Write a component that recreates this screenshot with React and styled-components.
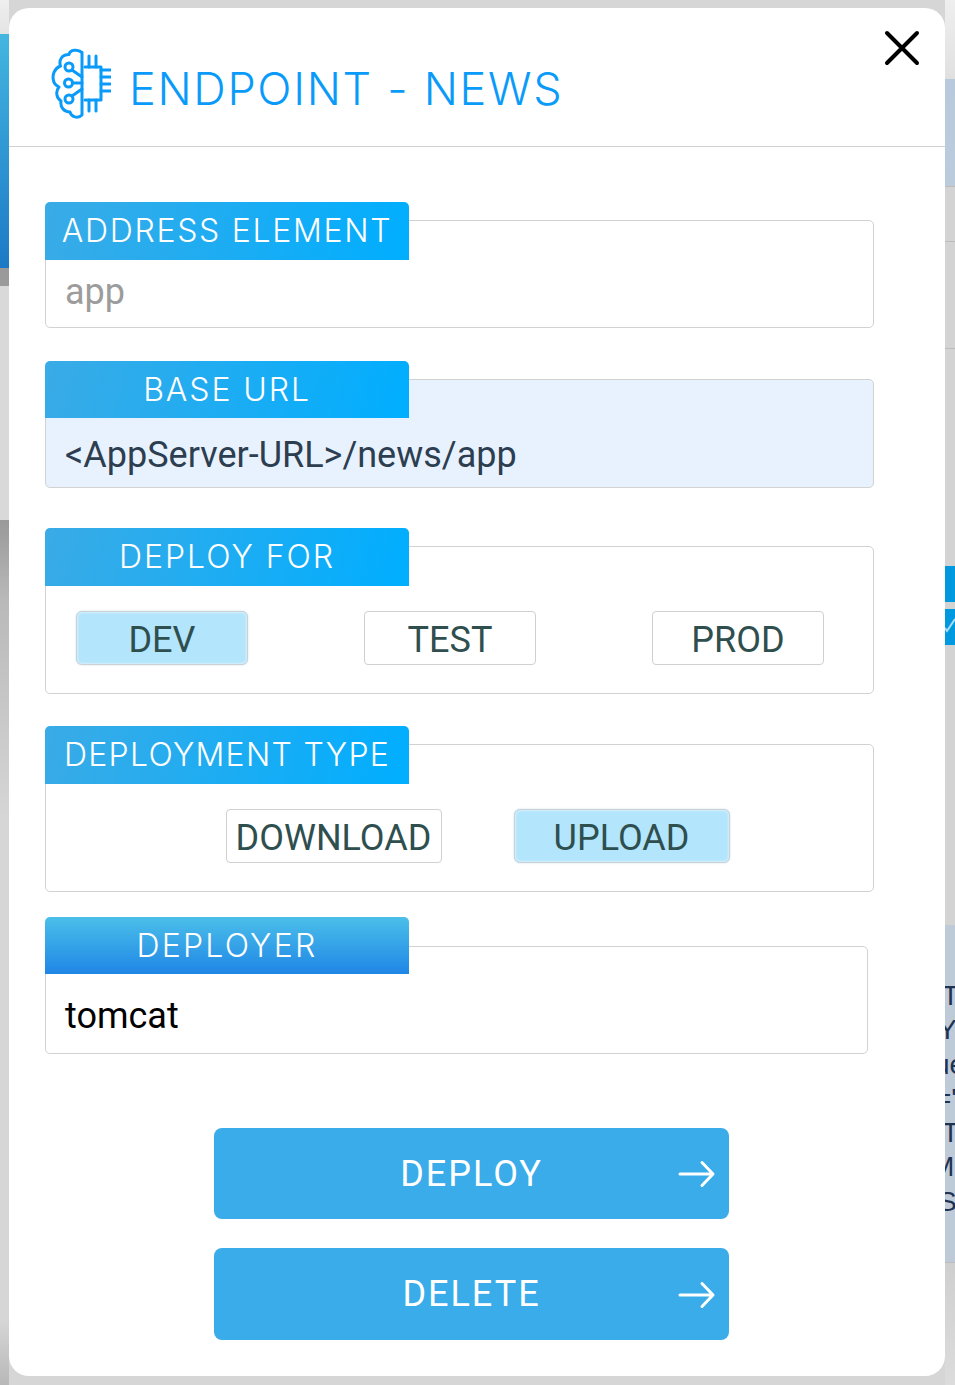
import React from "react";
import styled, { createGlobalStyle } from "styled-components";

const Global = createGlobalStyle`
  html, body { margin: 0; padding: 0; background: #d6d6d6; }
  #root { width: 955px; height: 1385px; overflow: hidden; position: relative; }
`;

const Backdrop = styled.div`
  display: flex;
  justify-content: space-between;
  width: 955px;
  height: 1385px;
`;
const Strip = styled.div`
  display: flex;
  flex-direction: column;
  width: ${(p) => p.$w}px;
  height: 1385px;
  overflow: hidden;
`;
const Block = styled.div`
  height: ${(p) => p.$h}px;
  flex: none;
  background: ${(p) => p.$bg};
  box-sizing: border-box;
  border-bottom: ${(p) => (p.$line ? "1px solid #bcbcbc" : "none")};
  color: #fff;
  overflow: hidden;
`;
const CodeBlock = styled(Block)`
  padding-top: 54px;
  color: #1f3350;
  font: 28px/34.3px "Liberation Sans", sans-serif;
`;
const CodeLine = styled.div`
  margin-left: ${(p) => p.$x}px;
  white-space: nowrap;
`;
const Tick = styled.svg`
  display: block;
  margin-top: 5px;
`;

const Modal = styled.div`
  position: absolute;
  left: 9px;
  top: 8px;
  width: 936px;
  height: 1368px;
  background: #fff;
  border-radius: 20px;
`;
const Header = styled.header`
  display: flex;
  align-items: center;
  height: 139px;
  box-sizing: border-box;
  padding: 13px 0 0 42px;
  gap: 18px;
  border-bottom: 1px solid #d0d0d0;
`;
const Title = styled.h1`
  margin: 0;
  padding-top: 10px;
  font: 300 45px/1 Inter, sans-serif;
  letter-spacing: 1.7px;
  color: #0a9bfa;
  white-space: nowrap;
`;
const Close = styled.svg`
  position: absolute;
  left: 873px;
  top: 20px;
`;
const Body = styled.div`
  display: flex;
  flex-direction: column;
  padding: 55px 0 0 36px;
`;
const Field = styled.section`
  display: flex;
  flex-direction: column;
  margin-top: ${(p) => p.$mt}px;
`;
const Label = styled.div`
  position: relative;
  z-index: 1;
  display: flex;
  align-items: center;
  justify-content: center;
  width: 364px;
  height: ${(p) => p.$h}px;
  border-radius: 5px 5px 0 0;
  background: ${(p) =>
    p.$vertical
      ? "linear-gradient(180deg, #4bbfe9, #1f86e6)"
      : "linear-gradient(105deg, #3aabe6, #00aeff)"};
  color: #fff;
  font: 300 32px/1 Inter, sans-serif;
  letter-spacing: ${(p) => p.$ls}px;
  white-space: nowrap;
`;
const Box = styled.div`
  display: flex;
  align-items: center;
  box-sizing: border-box;
  width: ${(p) => p.$w || 829}px;
  height: ${(p) => p.$h}px;
  margin-top: ${(p) => -p.$overlap}px;
  padding: ${(p) => p.$overlap + (p.$pt || 0)}px ${(p) => p.$pr || 0}px 0 ${(p) => p.$pl ?? 19}px;
  border: 1px solid #d2d2d2;
  border-radius: 5px;
  background: ${(p) => p.$bg || "#fff"};
  justify-content: ${(p) => p.$justify || "flex-start"};
  gap: ${(p) => p.$gap || 0}px;
`;
const Value = styled.span`
  font: 400 36px/1 Roboto, sans-serif;
  color: ${(p) => p.$color};
  white-space: nowrap;
`;
const Toggle = styled.div`
  display: flex;
  align-items: center;
  justify-content: center;
  box-sizing: border-box;
  width: ${(p) => p.$w}px;
  height: 54px;
  padding-top: 4px;
  border: 1px solid #d0d0d0;
  border-radius: ${(p) => (p.$on ? 6 : 4)}px;
  background: ${(p) => (p.$on ? "#b3e5fc" : "#fff")};
  box-shadow: ${(p) => (p.$on ? "inset 0 0 3px rgba(255,255,255,.9), 0 0 2px rgba(120,200,240,.5)" : "none")};
  color: #2f4f4f;
  font: 400 36px/1 Roboto, "Noto Sans", sans-serif;
`;
const Action = styled.button`
  position: relative;
  display: flex;
  align-items: center;
  justify-content: center;
  box-sizing: border-box;
  width: 515px;
  height: ${(p) => p.$h}px;
  margin: ${(p) => p.$mt}px 0 0 169px;
  padding: 0;
  border: 0;
  border-radius: 8px;
  background: #39ace9;
  color: #fff;
  font: 400 36px/1 Roboto, sans-serif;
  letter-spacing: 2px;
`;
const Arrow = styled.svg`
  position: absolute;
  right: 13px;
  top: 50%;
  margin-top: ${(p) => p.$mt}px;
`;

const ArrowIcon = ({ mt }) => (
  <Arrow $mt={mt} width="38" height="30" viewBox="0 0 38 30" fill="none" stroke="#fff" strokeWidth="3" strokeLinecap="round" strokeLinejoin="round">
    <path d="M2 15H35M24 3.500 35 15 24 26.500" />
  </Arrow>
);

const Logo = () => (
  <svg width="60" height="72" viewBox="0 0 60 72" fill="none" stroke="#0a9bfa" strokeWidth="3" strokeLinecap="round" strokeLinejoin="round">
    <path d="M31 4.500C27 1 19 1.500 18 6.500 11 6.500 7.500 12 9.500 18 3.500 20 1 27 2.500 32.500 3 36 6 38 8 39 4.500 43 5 50 10 53 9 59 13 64 19 64 20 69 27 71 31 67V4.500Z" />
    <circle cx="18" cy="19" r="4" />
    <circle cx="17.500" cy="35" r="4" />
    <circle cx="18" cy="51" r="4" />
    <path d="M21 22 31 29M21.500 35H31M21 48 31 41" />
    <path d="M34 19H50V36M50 40V52H34" />
    <path d="M38 19V8M45 19V8M38 52V63M45 52V63" />
    <path d="M50 22H59M50 29H59M50 36H59M50 43H59" />
    <path d="M50 37.500V38.500" />
  </svg>
);

export default function App() {
  return (
    <>
      <Global />
      <Backdrop>
        <Strip $w={9}>
          <Block $h={34} $bg="linear-gradient(180deg,#efefef,#e4e4e4)" />
          <Block $h={234} $bg="linear-gradient(180deg,#43b6e0,#1c79c6)" />
          <Block $h={18} $bg="#9a9a9a" />
          <Block $h={234} $bg="#d9d9d9" />
          <Block $h={865} $bg="linear-gradient(180deg,#999 0,#b9b9b9 80px,#d6d6d6 300px,#d6d6d6 800px,#b8b8b8 865px)" />
        </Strip>
        <Strip $w={10}>
          <Block $h={79} $bg="linear-gradient(180deg,#efefef,#e0e0e0)" />
          <Block $h={108} $bg="linear-gradient(180deg,#b9c9dd,#bccbdc)" $line />
          <Block $h={55} $bg="#d3d3d3" $line />
          <Block $h={107} $bg="#d3d3d3" $line />
          <Block $h={217} $bg="#d3d3d3" />
          <Block $h={36} $bg="#0099e0" />
          <Block $h={7} $bg="#d3d3d3" />
          <Block $h={36} $bg="#0099e0">
            <Tick width="10" height="26" viewBox="0 0 10 26" fill="none" stroke="#a9dcf5" strokeWidth="2">
              <path d="M0 14 2 17 10 5" />
            </Tick>
          </Block>
          <Block $h={280} $bg="#d3d3d3" />
          <CodeBlock $h={338} $bg="#bfcad9" $line>
            <CodeLine $x={-3}>T</CodeLine>
            <CodeLine $x={-7}>Y</CodeLine>
            <CodeLine $x={-11}>ue</CodeLine>
            <CodeLine $x={-10}>='</CodeLine>
            <CodeLine $x={-3}>T</CodeLine>
            <CodeLine $x={-14}>M</CodeLine>
            <CodeLine $x={-7}>S</CodeLine>
          </CodeBlock>
          <Block $h={122} $bg="linear-gradient(180deg,#cfcfcf,#dcdcdc)" />
        </Strip>
      </Backdrop>
      <Modal>
        <Header>
          <Logo />
          <Title>ENDPOINT - NEWS</Title>
        </Header>
        <Close width="40" height="40" viewBox="0 0 40 40" fill="none" stroke="#000" strokeWidth="4" strokeLinecap="round">
          <path d="M5 5 35 35M35 5 5 35" />
        </Close>
        <Body>
          <Field $mt={0}>
            <Label $h={58} $ls={1.7}>ADDRESS ELEMENT</Label>
            <Box $h={108} $overlap={40} $pt={-4}>
              <Value $color="#9c9c9c">app</Value>
            </Box>
          </Field>
          <Field $mt={33}>
            <Label $h={57} $ls={1.9}>BASE URL</Label>
            <Box $h={109} $overlap={39} $pt={4} $bg="#e8f2fe">
              <Value $color="#2c3e50">&lt;AppServer-URL&gt;/news/app</Value>
            </Box>
          </Field>
          <Field $mt={40}>
            <Label $h={58} $ls={2}>DEPLOY FOR</Label>
            <Box $h={148} $overlap={40} $pt={-4} $pl={30} $pr={49} $justify="space-between">
              <Toggle $w={172} $on>DEV</Toggle>
              <Toggle $w={172}>TEST</Toggle>
              <Toggle $w={172}>PROD</Toggle>
            </Box>
          </Field>
          <Field $mt={32}>
            <Label $h={58} $ls={1.3}>DEPLOYMENT TYPE</Label>
            <Box $h={148} $overlap={40} $pt={-4} $pl={36} $justify="center" $gap={72}>
              <Toggle $w={216}>DOWNLOAD</Toggle>
              <Toggle $w={216} $on>UPLOAD</Toggle>
            </Box>
          </Field>
          <Field $mt={25}>
            <Label $h={57} $ls={2.2} $vertical>DEPLOYER</Label>
            <Box $w={823} $h={108} $overlap={28} $pt={4}>
              <Value $color="#000">tomcat</Value>
            </Box>
          </Field>
          <Action $h={91} $mt={74}>DEPLOY<ArrowIcon mt={-15} /></Action>
          <Action $h={92} $mt={29}>DELETE<ArrowIcon mt={-14} /></Action>
        </Body>
      </Modal>
    </>
  );
}
